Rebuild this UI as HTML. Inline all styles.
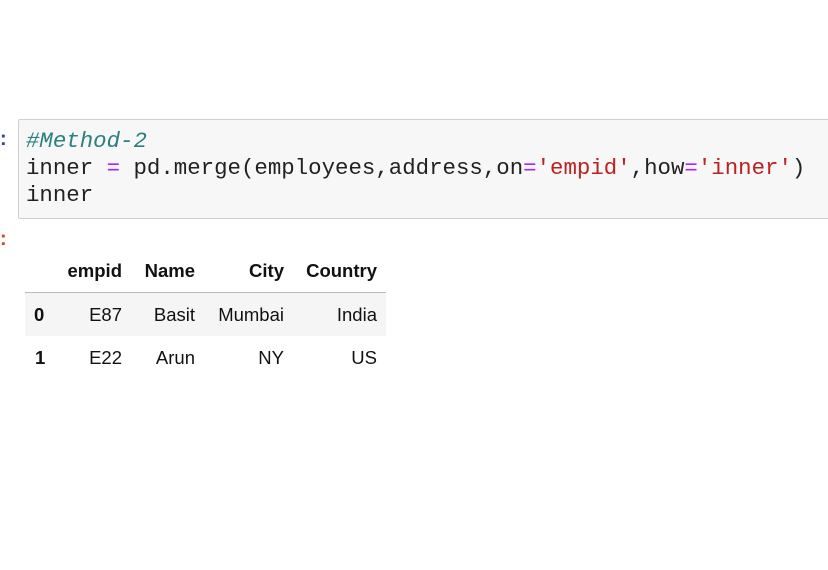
<!DOCTYPE html>
<html><head><style>
body{margin:0;width:828px;height:570px;background:#fff;position:relative;overflow:hidden;font-family:"Liberation Sans",sans-serif}
.cell{position:absolute;left:18px;top:119px;width:830px;height:100px;background:#f7f7f7;border:1px solid #cfcfcf;border-radius:2px;box-sizing:border-box}
pre{position:absolute;left:26px;top:128px;margin:0;font-family:"Liberation Mono",monospace;font-size:22.4px;line-height:27px;color:#222}
.c{color:#2a8080;font-style:italic}.o{color:#aa22ff}.s{color:#ba2121}
.p{position:absolute;left:0;font-weight:bold;font-size:20px}
.t{position:absolute;font-size:18.5px;color:#111}
.r{text-align:right;width:120px}
.b{font-weight:bold}
</style></head><body>
<div class="p" style="top:128px;color:#303f9f">:</div>
<div class="p" style="top:228px;color:#d84315">:</div>
<div class="cell"></div>
<pre><span class="c">#Method-2</span>
inner <span class="o">=</span> pd.merge(employees,address,on<span class="o">=</span><span class="s">'empid'</span>,how<span class="o">=</span><span class="s">'inner'</span>)
inner</pre>
<div style="position:absolute;left:25px;top:292px;width:361px;height:1px;background:#bbb"></div>
<div style="position:absolute;left:25px;top:293px;width:361px;height:43px;background:#f5f5f5"></div>
<div class="t b r" style="left:2px;top:260px">empid</div>
<div class="t b r" style="left:75px;top:260px">Name</div>
<div class="t b r" style="left:164px;top:260px">City</div>
<div class="t b r" style="left:257px;top:260px">Country</div>
<div class="t b" style="left:34px;top:304px">0</div>
<div class="t r" style="left:2px;top:304px">E87</div>
<div class="t r" style="left:75px;top:304px">Basit</div>
<div class="t r" style="left:164px;top:304px">Mumbai</div>
<div class="t r" style="left:257px;top:304px">India</div>
<div class="t b" style="left:35px;top:347px">1</div>
<div class="t r" style="left:2px;top:347px">E22</div>
<div class="t r" style="left:75px;top:347px">Arun</div>
<div class="t r" style="left:164px;top:347px">NY</div>
<div class="t r" style="left:257px;top:347px">US</div>
</body></html>
